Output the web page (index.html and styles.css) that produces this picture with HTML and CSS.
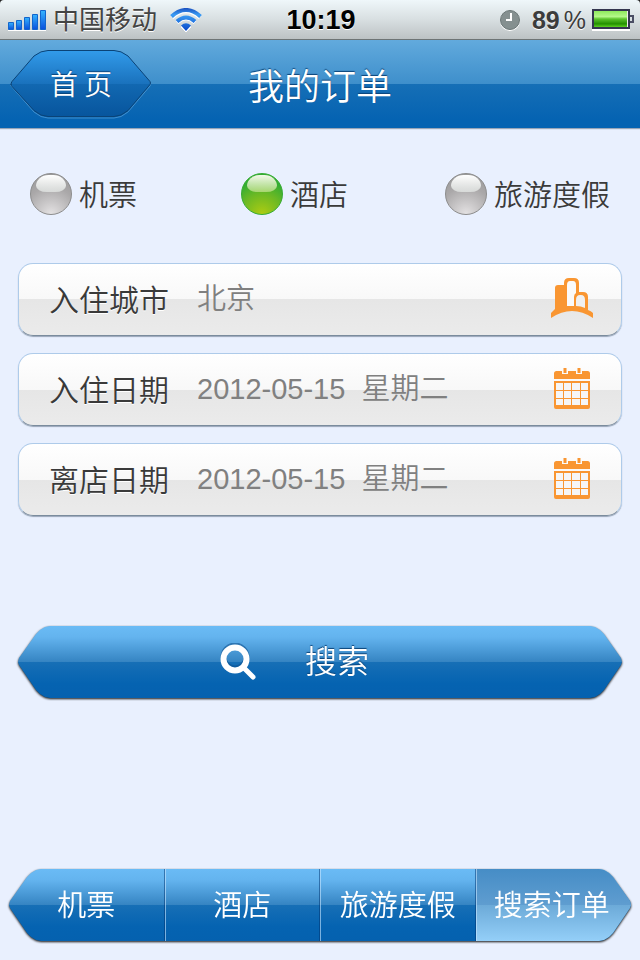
FILE: index.html
```html
<!DOCTYPE html>
<html lang="zh-CN">
<head>
<meta charset="utf-8">
<meta name="viewport" content="width=device-width, initial-scale=1">
<title>我的订单</title>
<link rel="stylesheet" href="styles.css">
</head>
<body>
<svg class="defs" width="0" height="0" aria-hidden="true">
  <defs>
    <linearGradient id="signal" x1="0" y1="0" x2="0" y2="1"><stop offset="0" stop-color="#35b4ff"/><stop offset="1" stop-color="#0a4fdc"/></linearGradient>
    <linearGradient id="wave" gradientUnits="userSpaceOnUse" x1="0" y1="0" x2="0" y2="23"><stop offset="0" stop-color="#1a50c0"/><stop offset=".3" stop-color="#3a9cf4"/><stop offset="1" stop-color="#0848c8"/></linearGradient>
    <linearGradient id="charge" x1="0" y1="0" x2="0" y2="1"><stop offset="0" stop-color="#8eea5c"/><stop offset=".35" stop-color="#b4f88a"/><stop offset=".5" stop-color="#5cc42c"/><stop offset=".8" stop-color="#239000"/><stop offset="1" stop-color="#5cd020"/></linearGradient>
    <linearGradient id="home" x1="0" y1="0" x2="0" y2="1"><stop offset="0" stop-color="#329bea"/><stop offset=".5" stop-color="#1a72bd"/><stop offset=".51" stop-color="#1268b1"/><stop offset="1" stop-color="#07559d"/></linearGradient>
    <symbol id="calendar" viewBox="0 0 36 42">
      <path fill="#f99632" d="M2.500 4H8v3h6V4h8v3h6V4h5.500Q36 4 36 6.500V12H0V6.500Q0 4 2.500 4zM9.500 1h3v5h-3zM23.500 1h3v5h-3zM0 14h36v26q0 2-2 2H2q-2 0-2-2z"/>
      <path fill="#f6f6f6" d="M2 16h7v7H2zM10 16h7v7h-7zM18 16h8v7h-8zM27 16h7v7h-7zM2 24h7v7H2zM10 24h7v7h-7zM18 24h8v7h-8zM27 24h7v7h-7zM2 32h7v6H2zM10 32h7v6h-7zM18 32h8v6h-8zM27 32h7v6h-7z"/>
    </symbol>
  </defs>
</svg>

<div class="status">
  <div class="status-bar">
    <div class="status-side">
      <svg width="40" height="22" viewBox="0 0 40 22" aria-hidden="true"><g fill="#fff"><path d="M0 21h38v1H0z"/></g><g fill="url(#signal)" stroke="#1265cc"><path d="M.5 13.500h5v7h-5z"/><path d="M8.500 11.500h5v9h-5z"/><path d="M16.500 8.500h5v12h-5z"/><path d="M24.500 5.500h5v15h-5z"/><path d="M32.500 1.500h5v19h-5z"/></g></svg>
      <span class="carrier">中国移动</span>
      <svg class="wifi" width="32" height="24" viewBox="0 0 32 24" aria-hidden="true"><g fill="none" stroke="#fff" transform="translate(0 1)"><path stroke-width="4" d="M2 8.500Q16-4 30 8.500M7 13.500Q16 5 25 13.500"/><path fill="#fff" d="M11 18q5-5 10 0l-5 5z"/></g><g fill="none" stroke="url(#wave)" stroke-width="4"><path d="M1.500 8.500Q16-4.500 30.500 8.500M7 13.500Q16 5.500 25 13.500"/><path fill="url(#wave)" stroke="none" d="M11 17.500q5-4.500 10 0L16 23z"/></g></svg>
    </div>
    <time class="clock">10:19</time>
    <div class="status-side status-right">
      <svg width="20" height="21" viewBox="0 0 20 21" aria-hidden="true"><circle cx="10" cy="11" r="10" fill="#fff"/><circle cx="10" cy="10" r="9.500" fill="#859090" stroke="#6b7777"/><path fill="none" stroke="#fff" stroke-width="2" d="M11 3v7H6"/></svg>
      <span class="charge"><b>89</b><span>%</span></span>
      <svg width="42" height="22" viewBox="0 0 42 22" aria-hidden="true"><path fill="#fff" d="M0 20h38v2H0z"/><path fill="#eee" stroke="#34364f" stroke-width="2" d="M1 1h36v18H1z"/><path fill="none" stroke="#4b4e64" stroke-width="2" d="M38 7h3v6h-3"/><path fill="url(#charge)" d="M2 2h33v16H2z"/></svg>
    </div>
  </div>
</div>

<header class="header">
  <a class="home" href="#home">
    <svg width="142" height="70" viewBox="0 0 142 70" aria-hidden="true"><path fill="none" stroke="#7ab8e8" stroke-opacity=".5" d="M1 36.500Q1 35 2 34L24 8Q31 2.500 38 2.500h66q7 0 14 5.500l22 26q1 1.500 0 3l-22 26q-7 6-14 6H38q-7 0-14-6L2 38Q1 37.500 1 36z"/><path fill="url(#home)" stroke="#0a4377" d="M1 35.500Q1 34 2 32.500L24 7Q31 1.500 38 1.500h66q7 0 14 5.500l22 25.500q1 1.500 0 3l-22 26q-7 6-14 6H38q-7 0-14-6L2 37.500Q1 36.500 1 35z"/></svg>
    <span>首 页</span>
  </a>
  <h1>我的订单</h1>
</header>

<main>
  <form>
    <div class="kinds" role="radiogroup" aria-label="订单类型">
      <label><input type="radio" name="kind"><span>机票</span></label>
      <label><input type="radio" name="kind" checked><span>酒店</span></label>
      <label><input type="radio" name="kind"><span>旅游度假</span></label>
    </div>

    <div class="fields">
      <div class="field">
        <label for="city">入住城市</label>
        <input id="city" type="text" value="北京">
        <button type="button" aria-label="选择城市">
          <svg width="44" height="42" viewBox="0 0 44 42" aria-hidden="true"><path fill="#f99632" d="M5 32V11q0-3 3-3h6V6q0-5 5-5h5q5 0 5 5v9h4q5 0 5 5v13q3 1 5 3v5Q22 27 1 41v-5q2-2 4-4z"/><path fill="#fafafa" d="M17 29V8q0-4 3-4h3q3 0 3 4v8q-2 1-2 4v9z"/><path fill="#f0f0f0" d="M26 29v-6q0-5 4-5h1q4 0 4 5v8q-4-2-9-2z"/></svg>
        </button>
      </div>
      <div class="field">
        <label for="checkin">入住日期</label>
        <input id="checkin" type="text" value="2012-05-15  星期二">
        <button type="button" aria-label="选择入住日期"><svg width="36" height="42" aria-hidden="true"><use href="#calendar"/></svg></button>
      </div>
      <div class="field">
        <label for="checkout">离店日期</label>
        <input id="checkout" type="text" value="2012-05-15  星期二">
        <button type="button" aria-label="选择离店日期"><svg width="36" height="42" aria-hidden="true"><use href="#calendar"/></svg></button>
      </div>
    </div>

    <div class="shadow search-wrap">
      <button class="search hex" type="submit">
        <svg width="38" height="38" viewBox="0 0 38 38" aria-hidden="true"><g fill="none" stroke="#0b4f8d" stroke-opacity=".55"><circle cx="16" cy="14" r="11.500" stroke-width="6"/></g><g fill="none" stroke="#fff" stroke-linecap="round"><circle cx="16" cy="16" r="11.500" stroke-width="6"/><path stroke-width="5" d="m25 25 9 9"/></g></svg>
        <span>搜索</span>
      </button>
    </div>
  </form>
</main>

<nav class="shadow tabs-wrap">
  <div class="tabs hex">
    <a href="#flight">机票</a>
    <a href="#hotel">酒店</a>
    <a href="#holiday">旅游度假</a>
    <a class="active" href="#orders" aria-current="page">搜索订单</a>
  </div>
</nav>
</body>
</html>
```
FILE: styles.css
```css
* { box-sizing: border-box; }

body {
  display: flex;
  flex-direction: column;
  min-height: 100vh;
  margin: 0;
  background: #e9f0fe;
  color: #3a3a3a;
  font-family: "Noto Sans CJK SC", sans-serif;
  font-size: 29px;
  font-weight: 350;
  line-height: 40px;
}

a { color: inherit; text-decoration: none; }
button, input { margin: 0; padding: 0; border: 0; background: none; color: inherit; font: inherit; }
svg { display: block; flex: none; }
.defs { position: absolute; }

/* status bar */
.status { background: #222; }
.status-bar {
  display: grid;
  grid-template-columns: 1fr auto 1fr;
  align-items: center;
  height: 40px;
  padding: 0 6px 0 8px;
  border-bottom: 1px solid #6e7475;
  border-radius: 4px 4px 0 0;
  background: linear-gradient(#eff7fa, #d8dfe1 50%, #bcc2c4);
  text-shadow: 0 1px 0 #fff;
}
.status-side { display: flex; align-items: center; gap: 5px; }
.status-right { justify-content: flex-end; gap: 6px; }
.carrier { padding-bottom: 4px; color: #444; font-size: 26px; font-weight: 400; line-height: 36px; }
.wifi { margin-left: 8px; }
.clock { color: #000; font: bold 27px/40px "Liberation Sans", sans-serif; }
.charge {
  display: flex;
  gap: 4px;
  margin-left: 6px;
  color: #3c3c3c;
  font: 25px/40px "Liberation Sans", sans-serif;
}

/* title bar */
.header {
  display: grid;
  grid-template-columns: 1fr auto 1fr;
  align-items: center;
  height: 88px;
  padding: 0 10px;
  background: linear-gradient(#62aadd, #3e8fcb 50%, #166fb6 50%, #0563b2 90%);
  box-shadow: 0 1px 1px #98a5b8;
  color: #fff;
  text-shadow: 0 -1px 1px #0b4479;
}
.header h1 { margin: 0; font-size: 36px; font-weight: inherit; line-height: 48px; }
.home { display: grid; justify-self: start; place-items: center; font-size: 28px; }
.home > * { grid-area: 1 / 1; }
.home span { padding-bottom: 2px; }

/* order type */
.kinds {
  display: grid;
  grid-template-columns: 211fr 204fr 166fr;
  padding: 45px 29px 0 30px;
}
.kinds label { display: flex; align-items: center; gap: 7px; white-space: nowrap; }
.kinds span { padding-bottom: 2px; }
.kinds input {
  flex: none;
  width: 42px;
  height: 42px;
  appearance: none;
  border: 1px solid #8c8c8c;
  border-radius: 50%;
  background: radial-gradient(circle at 50% 100%, #e4e2e3, #aaa8a9 60%, #969696);
  position: relative;
}
.kinds input::before {
  content: "";
  position: absolute;
  inset: 1px 5px 22px;
  border-radius: 14px 14px 12px 12px / 12px 12px 7px 7px;
  background: linear-gradient(#fff, rgba(235, 240, 237, .65));
}
.kinds input:checked {
  border-color: #36ab32;
  background: radial-gradient(circle at 50% 100%, #adcc12, #6cb924 45%, #34ad32 75%);
}
.kinds input:checked::before { background: linear-gradient(#f4f9e8, rgba(215, 235, 160, .6)); }

/* search criteria */
.fields { display: grid; gap: 17px; padding: 48px 18px 0; }
.field {
  display: grid;
  grid-template-columns: 148px 1fr 44px;
  align-items: center;
  height: 73px;
  padding: 0 27px 4px 30px;
  border: 1px solid #aecbea;
  border-bottom-color: #7b8c9d;
  border-radius: 15px;
  background: linear-gradient(#fff, #f8f8f8 50%, #e6e6e6 50%, #ebebeb);
  box-shadow: 0 1px 1px #98a5b8;
}
.field label { font-size: 30px; text-shadow: 0 1px 0 #fff; }
.field input {
  width: 100%;
  min-width: 0;
  height: 44px;
  padding-bottom: 4px;
  color: #808080;
  font-family: "Liberation Sans", "Noto Sans CJK SC", sans-serif;
  white-space: pre;
}
.field button { display: grid; place-items: center; }

/* bars with pointed ends */
.hex {
  height: 72px;
  background: linear-gradient(#6abbf5, #64b4ef 15%, #3584c2 50%, #176fb6 50%, #0563b1 80%, #0561af);
  clip-path: polygon(
    32px 0, 27px 1px, 22px 4px, 18px 8px, 1px 32px, 0 36px, 1px 39px, 18px 64px, 22px 68px, 27px 71px, 32px 100%,
    calc(100% - 32px) 100%, calc(100% - 27px) 71px, calc(100% - 22px) 68px, calc(100% - 18px) 64px,
    calc(100% - 1px) 39px, 100% 36px, calc(100% - 1px) 32px, calc(100% - 18px) 8px, calc(100% - 22px) 4px,
    calc(100% - 27px) 1px, calc(100% - 32px) 0);
  color: #fff;
}
.shadow { filter: drop-shadow(0 1px 1px #111); }

.search-wrap { margin: 110px 18px 0; }
.search {
  display: flex;
  align-items: center;
  justify-content: center;
  gap: 48px;
  width: 100%;
  padding-right: 52px;
  font-size: 32px;
  text-shadow: 0 -1px 1px #0b4479;
}
.search span { padding-bottom: 6px; }

.tabs-wrap { margin: auto 9px 19px; }
.tabs { display: grid; grid-template-columns: repeat(4, 1fr); }
.tabs a {
  display: grid;
  place-items: center;
  padding-bottom: 4px;
  border-left: 1px solid rgba(200, 230, 255, .6);
  border-right: 1px solid rgba(0, 50, 110, .5);
  white-space: nowrap;
}
.tabs a:first-child { border-left: 0; }
.tabs .active {
  padding-right: 4px;
  border-right: 0;
  background: linear-gradient(#468dc6, #5f9dd0 50%, #6caad8 50%, #94cff8);
}
```
